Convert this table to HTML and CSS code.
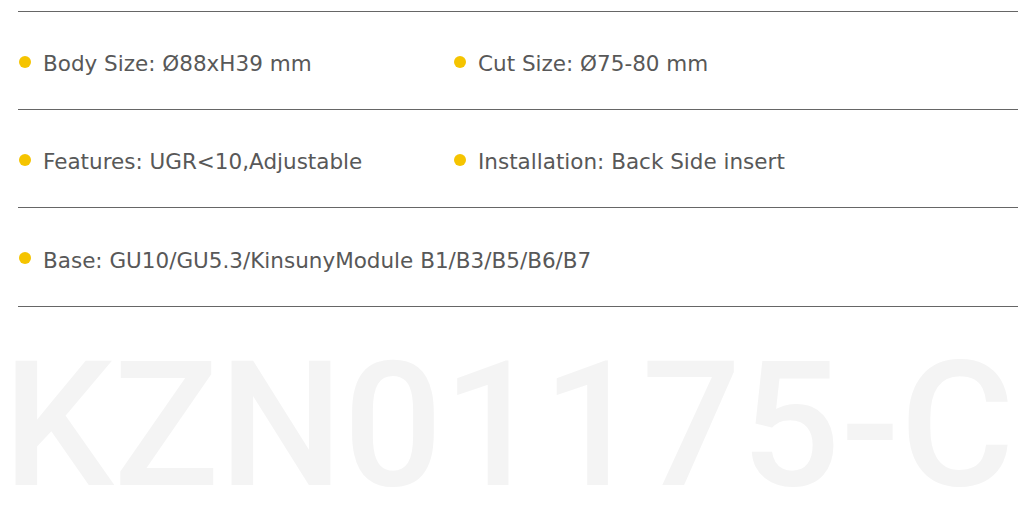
FILE: index.html
```html
<!DOCTYPE html>
<html>
<head>
<meta charset="utf-8">
<link rel="stylesheet" href="styles.css">
</head>
<body>
<div class="page">
  <ul class="specs">
    <li class="row">
      <span class="item">Body Size: Ø88xH39 mm</span>
      <span class="item">Cut Size: Ø75-80 mm</span>
    </li>
    <li class="row">
      <span class="item">Features: UGR&lt;10,Adjustable</span>
      <span class="item">Installation: Back Side insert</span>
    </li>
    <li class="row">
      <span class="item">Base: GU10/GU5.3/KinsunyModule B1/B3/B5/B6/B7</span>
    </li>
  </ul>
  <div class="model">KZN01175-C</div>
</div>
</body>
</html>
```

FILE: styles.css
```css
html, body {
  margin: 0;
  padding: 0;
  background: #ffffff;
  overflow: hidden;
}
.page {
  width: 1034px;
  height: 518px;
  overflow: hidden;
  padding: 11px 0 0 18px;
  box-sizing: border-box;
}
.specs {
  list-style: none;
  margin: 0;
  padding: 0;
  width: 1000px;
  border-top: 1px solid #666;
}
.row {
  display: grid;
  grid-template-columns: 435px 1fr;
  align-items: center;
  height: 97px;
  border-bottom: 1px solid #666;
  font-family: "DejaVu Sans", sans-serif;
  font-size: 21.5px;
  color: #585858;
}
.row:last-child {
  height: 98px;
}
.item {
  display: flex;
  align-items: center;
  gap: 12px;
  padding-top: 6px;
  white-space: nowrap;
}
.item::before {
  content: "";
  width: 12px;
  height: 12px;
  margin-left: 1px;
  margin-top: -4px;
  border-radius: 50%;
  background: #f5c400;
  flex: none;
}
.model {
  font-family: "Roboto", sans-serif;
  font-weight: 500;
  font-size: 175px;
  line-height: 1;
  color: #f4f4f4;
  margin: 31px 0 0 -15px;
  white-space: nowrap;
  letter-spacing: 0;
}
```
